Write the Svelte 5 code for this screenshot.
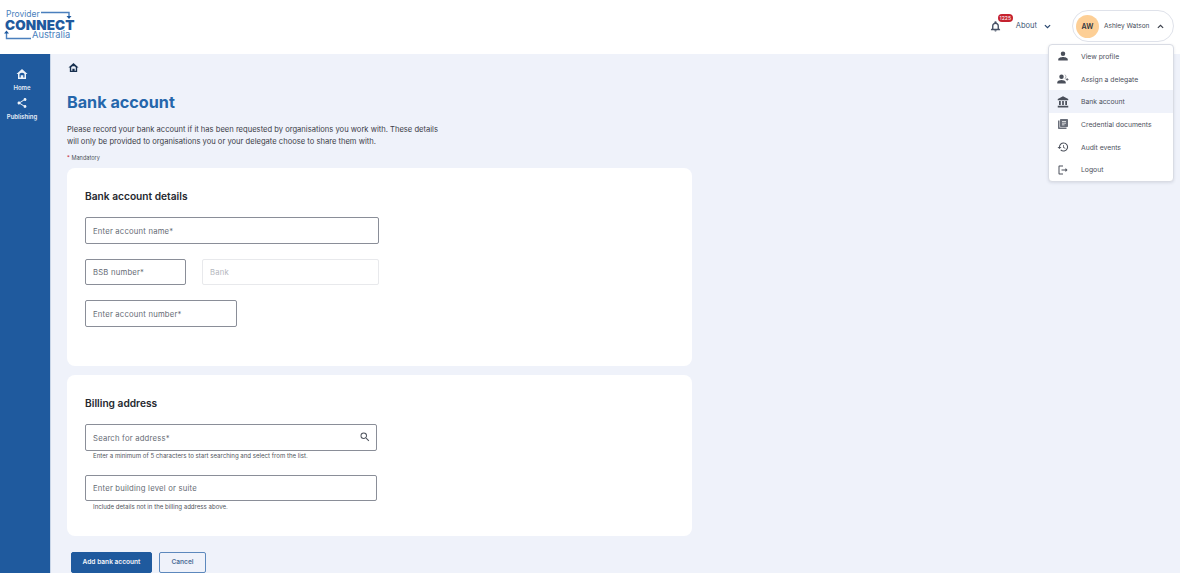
<script>
  const menu = [
    { label: 'View profile', icon: 'person' },
    { label: 'Assign a delegate', icon: 'delegate' },
    { label: 'Bank account', icon: 'bank', active: true },
    { label: 'Credential documents', icon: 'docs' },
    { label: 'Audit events', icon: 'history' },
    { label: 'Logout', icon: 'logout' }
  ];
  const paths = {
    person: 'M12 12a4.500 4.500 0 1 0 0-9 4.500 4.500 0 0 0 0 9zm0 2c-3.200 0-9.500 1.500-9.500 4.500V21h19v-2.500c0-3-6.300-4.500-9.500-4.500z',
    delegate: 'M9 12a4.500 4.500 0 1 0 0-9 4.500 4.500 0 0 0 0 9zm0 2c-3 0-8.500 1.500-8.500 4.500V21h17v-2.500C17.500 15.500 12 14 9 14zM14.500 3.200a4.500 4.500 0 0 1 0 8.600c2.500 0 4-2 4-4.300s-1.500-4.300-4-4.300zM21 12v-2h-1.500v2h-2v1.500h2v2H21v-2h2V12z',
    bank: 'M4 10v8h3.500v-8H4zm6.300 0v8h3.400v-8h-3.400zM1.500 23h21v-3.500h-21V23zm15-13v8H20v-8h-3.500zM12 .5 1.500 6v2.500h21V6L12 .5z',
    docs: 'M2 5h3v14h14v3H3.500C2.700 22 2 21.300 2 20.500V5zM7.500 2h13c.8 0 1.500.7 1.500 1.500v13c0 .8-.7 1.500-1.500 1.500h-13C6.700 18 6 17.300 6 16.500v-13C6 2.700 6.700 2 7.500 2zM10 6v1.500h8V6h-8zm0 3.500V11h8V9.500h-8zm0 3.500v1.500h5V13h-5z',
    history: 'M13 3a9 9 0 0 0-9 9H1l3.900 3.900L9 12H6a7 7 0 1 1 2.100 4.900l-1.400 1.400A9 9 0 1 0 13 3zm-1 5v5l4.300 2.500.7-1.200-3.500-2.100V8H12z',
    logout: 'M5 5h7V3H5c-1.100 0-2 .9-2 2v14c0 1.100.9 2 2 2h7v-2H5V5zm16 7-4-4v3H9v2h8v3l4-4z'
  };
  const house = 'M12 2 1 12h3v10h16V12h3L12 2zM7 19v-6.500C7 11 9 9.500 12 9.500s5 1.500 5 3V19h-2.500v-4.500h-5V19H7z';
</script>

<div class="page">
  <header class="topbar">
    <div class="logo">
      <span class="logo-provider">Provider</span>
      <span class="logo-connect">CONNECT</span>
      <span class="logo-australia">Australia</span>
      <svg class="logo-lines" viewBox="0 0 74 40" aria-hidden="true">
        <path d="M36 2.500h28v4M1.500 23v5.500H26" fill="none" stroke="#4a7fbd" stroke-width="1.400" />
        <path d="M61.500 6h5l-2.500 3zM-1 23.500h5L1.500 20.500z" fill="#1f5a9e" />
      </svg>
    </div>
    <div class="top-right">
      <div class="bell">
        <svg viewBox="0 0 24 24" aria-hidden="true"><path d="M12 23a2.500 2.500 0 0 0 2.500-2.500h-5A2.500 2.500 0 0 0 12 23zm7.500-7v-5c0-3.500-1.800-6.200-5-7V3a2.500 2.500 0 0 0-5 0v1c-3.200.8-5 3.500-5 7v5L2 18.500V20h20v-1.500L19.500 16zM16.500 17h-9v-6c0-2.500 1.800-4.500 4.500-4.500s4.500 2 4.500 4.500v6z" /></svg>
        <span class="badge">1225</span>
      </div>
      <span class="about">About</span>
      <svg class="chev about-chev" viewBox="0 0 12 8" aria-hidden="true"><path d="M1.500 1.500 6 6l4.500-4.500" /></svg>
      <div class="user">
        <span class="avatar">AW</span>
        <span class="user-name">Ashley Watson</span>
        <svg class="chev user-chev" viewBox="0 0 12 8" aria-hidden="true"><path d="M1.500 6.500 6 2l4.500 4.500" /></svg>
      </div>
    </div>
  </header>

  <div class="body">
    <nav class="side">
      <div class="nav-item">
        <svg viewBox="0 0 24 24" aria-hidden="true"><path fill-rule="evenodd" d={house} /></svg>
        <span>Home</span>
      </div>
      <div class="nav-item">
        <svg viewBox="0 0 24 24" aria-hidden="true"><path d="M18 16.080c-.76 0-1.440.3-1.960.77L8.910 12.700c.05-.23.090-.46.090-.7s-.04-.47-.09-.7l7.050-4.110c.54.5 1.250.81 2.040.81 1.660 0 3-1.340 3-3s-1.340-3-3-3-3 1.340-3 3c0 .24.04.47.09.7L8.040 9.810C7.500 9.310 6.790 9 6 9c-1.660 0-3 1.340-3 3s1.340 3 3 3c.79 0 1.500-.31 2.040-.81l7.120 4.160c-.05.21-.08.43-.08.65 0 1.610 1.310 2.920 2.920 2.920 1.610 0 2.920-1.310 2.920-2.920s-1.310-2.920-2.920-2.920z" /></svg>
        <span>Publishing</span>
      </div>
    </nav>

    <main class="content">
      <svg class="crumb" viewBox="0 0 24 24" aria-hidden="true"><path fill-rule="evenodd" d={house} /></svg>
      <h1>Bank account</h1>
      <p class="intro">Please record your bank account if it has been requested by organisations you work with. These details<br />will only be provided to organisations you or your delegate choose to share them with.</p>
      <p class="mandatory"><span>*</span> Mandatory</p>

      <section class="card card-bank">
        <h2>Bank account details</h2>
        <div class="field w-name">Enter account name*</div>
        <div class="row">
          <div class="field w-bsb">BSB number*</div>
          <div class="field w-bank disabled">Bank</div>
        </div>
        <div class="field w-number">Enter account number*</div>
      </section>

      <section class="card card-billing">
        <h2>Billing address</h2>
        <div class="field w-address">
          Search for address*
          <svg viewBox="0 0 24 24" aria-hidden="true"><path d="M15.500 14h-.79l-.28-.27A6.470 6.470 0 0 0 16 9.500 6.500 6.500 0 1 0 9.500 16c1.610 0 3.090-.59 4.230-1.570l.27.28v.79l5 4.990L20.490 19l-4.990-5zm-6 0C7.010 14 5 11.990 5 9.500S7.010 5 9.500 5 14 7.010 14 9.500 11.990 14 9.500 14z" /></svg>
        </div>
        <p class="hint">Enter a minimum of 5 characters to start searching and select from the list.</p>
        <div class="field w-address second">Enter building level or suite</div>
        <p class="hint">Include details not in the billing address above.</p>
      </section>

      <div class="actions">
        <button class="primary">Add bank account</button>
        <button class="secondary">Cancel</button>
      </div>
    </main>
  </div>

  <ul class="menu">
    {#each menu as item}
      <li class:active={item.active}>
        <svg class={item.icon} viewBox="0 0 24 24" aria-hidden="true"><path d={paths[item.icon]} /></svg>
        <span>{item.label}</span>
      </li>
    {/each}
  </ul>
</div>

<style>
  :global(body) {
    margin: 0;
    background: #eff2fa;
    font-family: Inter, "Liberation Sans", sans-serif;
    color: #3f4450;
  }
  .page {
    position: relative;
    width: 1180px;
    height: 573px;
    overflow: hidden;
  }
  .topbar {
    height: 54px;
    background: #fff;
    display: flex;
    justify-content: space-between;
    align-items: flex-start;
  }
  .logo {
    position: relative;
    width: 74px;
    height: 40px;
    margin: 10px 0 0 5px;
    color: #1f5a9e;
  }
  .logo span {
    position: absolute;
    white-space: nowrap;
  }
  .logo-provider {
    left: 1px;
    top: 0.250px;
    font-size: 8.500px;
    line-height: 8px;
    color: #4a7fbd;
  }
  .logo-connect {
    left: 0;
    top: 9.750px;
    font-size: 13.500px;
    line-height: 10px;
    font-weight: 900;
    letter-spacing: 0.100px;
  }
  .logo-australia {
    left: 27px;
    top: 20.650px;
    font-size: 9.300px;
    line-height: 8px;
    color: #4a7fbd;
  }
  .logo-lines {
    position: absolute;
    left: 0;
    top: 0;
    width: 74px;
    height: 40px;
    overflow: visible;
  }
  .top-right {
    display: flex;
    align-items: center;
    height: 32px;
    margin: 10px 6px 0 0;
  }
  .bell {
    position: relative;
    width: 11px;
    height: 11px;
    margin-right: 15px;
  }
  .bell svg {
    display: block;
    width: 11px;
    height: 11px;
    fill: #465064;
  }
  .badge {
    position: absolute;
    left: 8px;
    top: -7px;
    width: 15px;
    height: 8px;
    border-radius: 4px;
    background: #c5222f;
    color: #fff;
    font-size: 5.200px;
    line-height: 8px;
    text-align: center;
  }
  .about {
    font-size: 7.500px;
    color: #3e5675;
    margin-right: 7px;
    margin-top: -1px;
  }
  .chev {
    fill: none;
    stroke-width: 2;
  }
  .about-chev {
    width: 7px;
    height: 5px;
    stroke: #27456e;
    margin-right: 21px;
  }
  .user {
    width: 102px;
    height: 32px;
    box-sizing: border-box;
    border: 1px solid #dfe2ea;
    border-radius: 16px;
    background: #fff;
    display: flex;
    align-items: center;
    padding-left: 3px;
  }
  .avatar {
    width: 23px;
    height: 23px;
    border-radius: 50%;
    background: #fdcf96;
    color: #30343d;
    font-size: 7px;
    font-weight: 600;
    display: flex;
    align-items: center;
    justify-content: center;
    margin-right: 5px;
  }
  .user-name {
    font-size: 6.500px;
    color: #444a56;
    white-space: nowrap;
  }
  .user-chev {
    width: 7px;
    height: 5px;
    stroke: #3a3f4a;
    margin-left: 8px;
  }
  .body {
    display: flex;
    height: 519px;
  }
  .side {
    flex: none;
    width: 50px;
    box-sizing: content-box;
    background: #1f5a9e;
    border-right: 1px solid #c9d6e8;
    padding-top: 13px;
    display: flex;
    flex-direction: column;
    align-items: center;
    gap: 4px;
  }
  .nav-item {
    display: flex;
    flex-direction: column;
    align-items: center;
    color: #e6edf6;
    font-size: 6px;
    font-weight: 600;
    line-height: 9px;
    margin-right: 6px;
  }
  .nav-item svg {
    width: 12px;
    height: 14px;
    fill: #eef3f9;
    margin-bottom: 2px;
  }
  .content {
    flex: 1;
    min-width: 0;
    padding: 8px 0 0 16px;
  }
  .crumb {
    display: block;
    width: 11px;
    height: 11px;
    fill: #17304f;
    margin-left: 1px;
  }
  h1 {
    margin: 17px 0 0;
    font-size: 16.200px;
    line-height: 24px;
    font-weight: 700;
    color: #2566ab;
  }
  .intro {
    margin: 10px 0 0;
    font-size: 7.600px;
    line-height: 12px;
    color: #3c4048;
  }
  .mandatory {
    margin: 5px 0 0;
    font-size: 5.600px;
    line-height: 10px;
    color: #50545c;
  }
  .mandatory span {
    color: #c5222f;
  }
  .card {
    width: 625px;
    box-sizing: border-box;
    background: #fff;
    border-radius: 8px;
    padding-left: 18px;
  }
  .card-bank {
    height: 198px;
    margin-top: 5px;
    padding-top: 21px;
  }
  .card-billing {
    height: 161px;
    margin-top: 9px;
    padding-top: 21px;
  }
  h2 {
    margin: 0;
    font-size: 10.200px;
    line-height: 14px;
    font-weight: 600;
    color: #25282e;
  }
  .field {
    box-sizing: border-box;
    height: 26.500px;
    border: 1px solid #8a8e98;
    border-radius: 2px;
    background: #fff;
    font-size: 7.700px;
    letter-spacing: 0.200px;
    color: #666b75;
    padding: 2px 0 0 7px;
    display: flex;
    align-items: center;
    justify-content: space-between;
  }
  .card-bank h2,
  .card-billing h2 {
    margin-bottom: 14px;
  }
  .w-name {
    width: 294px;
  }
  .row {
    display: flex;
    gap: 16px;
    margin: 15px 0;
  }
  .w-bsb {
    width: 101px;
  }
  .w-bank {
    width: 177px;
  }
  .disabled {
    border-color: #e8e9ec;
    color: #b4b7be;
  }
  .w-number {
    width: 152px;
  }
  .w-address {
    width: 292px;
  }
  .w-address svg {
    width: 12px;
    height: 12px;
    fill: #4f545e;
    margin: -2px 5px 0 0;
  }
  .second {
    margin-top: 15px;
  }
  .hint {
    margin: 1px 0 0 8px;
    font-size: 6.100px;
    line-height: 8px;
    color: #50545c;
  }
  .second + .hint {
    margin-top: 2px;
  }
  .actions {
    display: flex;
    gap: 7px;
    margin: 16px 0 0 4px;
  }
  button {
    box-sizing: border-box;
    height: 20.500px;
    border-radius: 2px;
    font-family: inherit;
    font-size: 6.600px;
    font-weight: 600;
    padding: 0;
  }
  .primary {
    width: 81px;
    background: #1f5a9e;
    border: 1px solid #1f5a9e;
    color: #f2f5fa;
  }
  .secondary {
    width: 47px;
    background: transparent;
    border: 1px solid #5c88bd;
    color: #4e6e97;
  }
  .menu {
    position: absolute;
    left: 1048px;
    top: 44px;
    width: 126px;
    height: 138px;
    box-sizing: border-box;
    margin: 0;
    padding: 0;
    list-style: none;
    background: #fff;
    border: 1px solid #d9dce4;
    border-radius: 4px;
    box-shadow: 0 1px 3px rgba(40, 50, 70, 0.120);
  }
  .menu li {
    height: 22.700px;
    display: flex;
    align-items: center;
    padding-left: 8px;
    font-size: 6.800px;
    color: #4c515c;
  }
  .menu li.active {
    background: #eff2fa;
  }
  .menu svg {
    width: 12px;
    height: 12px;
    fill: #4a4f5a;
    margin-right: 12px;
  }
  .menu svg.docs {
    fill: #6a6f7a;
  }
</style>
